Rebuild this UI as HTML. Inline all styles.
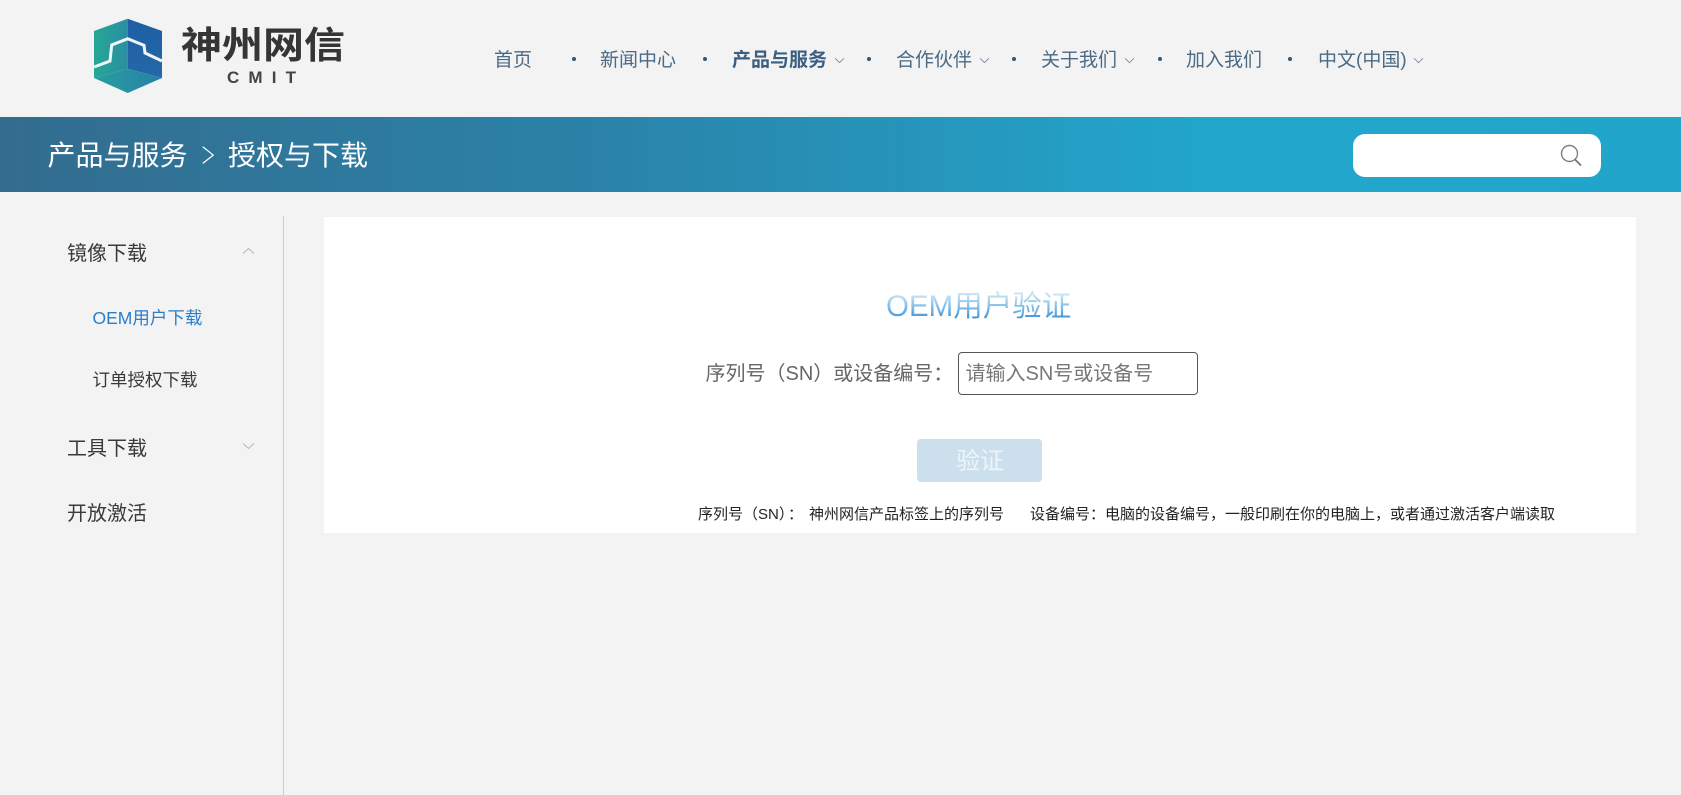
<!DOCTYPE html>
<html lang="zh-CN">
<head>
<meta charset="utf-8">
<title>授权与下载</title>
<style>
html,body{margin:0;padding:0;width:1681px;height:795px;overflow:hidden;background:#f3f3f4;}
body{position:relative;font-family:"Liberation Sans","Noto Sans CJK SC",sans-serif;}
.t{position:absolute;white-space:nowrap;}
.nav{font-size:19px;line-height:30px;top:46px;color:#4b6a85;}
.dot{position:absolute;width:4px;height:4px;border-radius:50%;background:#3a566c;top:57px;}
svg{position:absolute;overflow:visible;}
.band{position:absolute;left:0;top:117px;width:1681px;height:75px;background:linear-gradient(90deg,#336c8f 0,#2b82a8 35%,#22a6cc 72%,#21a5cb 100%);}
.side{font-size:20px;line-height:30px;color:#3a3a3a;left:67px;}
.sub{font-size:17.5px;line-height:28px;left:92.5px;}
</style>
</head>
<body>
<!-- logo -->
<svg style="left:0;top:0" width="400" height="117" viewBox="0 0 400 117">
<defs>
<linearGradient id="g1" x1="0" y1="0" x2="1" y2="0"><stop offset="0" stop-color="#26a896"/><stop offset="1" stop-color="#2a8ea2"/></linearGradient>
<linearGradient id="g2" x1="0" y1="0" x2="0" y2="1"><stop offset="0" stop-color="#1f5ea3"/><stop offset="1" stop-color="#2468a8"/></linearGradient>
<linearGradient id="g3" x1="0" y1="0" x2="1" y2="0"><stop offset="0" stop-color="#289f9e"/><stop offset="1" stop-color="#2680a8"/></linearGradient>
</defs>
<polygon points="94,31 127.7,18.7 127.7,68.7 94,78" fill="url(#g1)"/>
<polygon points="127.7,18.7 162,31 162,78 127.7,68.7" fill="url(#g2)"/>
<polygon points="94,78 127.7,68.7 162,78 127.7,93" fill="url(#g3)"/>
<polyline points="94,67 110,61 111.7,45 127.7,38.7 144,45.3 145,53 162,61" fill="none" stroke="#f0f6f6" stroke-width="3"/>
<text x="181" y="58" font-family="'Noto Sans CJK SC',sans-serif" font-weight="700" font-size="37" fill="#353535" textLength="164" lengthAdjust="spacingAndGlyphs">神州网信</text>
<text x="227" y="83" font-family="'Liberation Sans',sans-serif" font-weight="700" font-size="17" fill="#444" textLength="69">CMIT</text>
</svg>

<!-- nav -->
<span class="t nav" style="left:494px">首页</span>
<i class="dot" style="left:572px"></i>
<span class="t nav" style="left:600px">新闻中心</span>
<i class="dot" style="left:703px"></i>
<span class="t nav" style="left:732px;font-weight:700;color:#3a5f80">产品与服务</span>
<svg style="left:834px;top:57px" width="11" height="7" viewBox="0 0 12 8"><path d="M1 1.5L6 6.5L11 1.5" fill="none" stroke="#76879a" stroke-width="1"/></svg>
<i class="dot" style="left:867px"></i>
<span class="t nav" style="left:896px">合作伙伴</span>
<svg style="left:979px;top:57px" width="11" height="7" viewBox="0 0 12 8"><path d="M1 1.5L6 6.5L11 1.5" fill="none" stroke="#76879a" stroke-width="1"/></svg>
<i class="dot" style="left:1012px"></i>
<span class="t nav" style="left:1041px">关于我们</span>
<svg style="left:1124px;top:57px" width="11" height="7" viewBox="0 0 12 8"><path d="M1 1.5L6 6.5L11 1.5" fill="none" stroke="#76879a" stroke-width="1"/></svg>
<i class="dot" style="left:1158px"></i>
<span class="t nav" style="left:1186px">加入我们</span>
<i class="dot" style="left:1288px"></i>
<span class="t nav" style="left:1318px">中文(中国)</span>
<svg style="left:1413px;top:57px" width="11" height="7" viewBox="0 0 12 8"><path d="M1 1.5L6 6.5L11 1.5" fill="none" stroke="#76879a" stroke-width="1"/></svg>

<!-- band -->
<div class="band"></div>
<span class="t" style="left:47.5px;top:136px;font-size:28px;line-height:40px;color:#fff">产品与服务</span>
<svg style="left:201px;top:145px" width="14" height="21" viewBox="0 0 16 22"><path d="M2 1L14 10.5L2 20" fill="none" stroke="#fff" stroke-width="1.4"/></svg>
<span class="t" style="left:228px;top:136px;font-size:28px;line-height:40px;color:#fff">授权与下载</span>
<div style="position:absolute;left:1353px;top:134px;width:248px;height:43px;background:#fff;border-radius:12px"></div>
<svg style="left:1558px;top:144px" width="26" height="24" viewBox="0 0 26 24"><circle cx="11.5" cy="9.5" r="8" fill="none" stroke="#808080" stroke-width="1.4"/><path d="M17 15.5L23 21.5" stroke="#707070" stroke-width="1.6" fill="none"/></svg>

<!-- sidebar -->
<div style="position:absolute;left:283px;top:216px;width:1px;height:579px;background:#cfcfcf"></div>
<span class="t side" style="top:239px">镜像下载</span>
<svg style="left:242px;top:247px" width="13" height="8" viewBox="0 0 13 8"><path d="M1 6.5L6.5 1.5L12 6.5" fill="none" stroke="#b5b5b5" stroke-width="1"/></svg>
<span class="t sub" style="top:304px;color:#2b7ec8">OEM用户下载</span>
<span class="t sub" style="top:366px;color:#3a3a3a">订单授权下载</span>
<span class="t side" style="top:434px">工具下载</span>
<svg style="left:242px;top:442px" width="13" height="8" viewBox="0 0 13 8"><path d="M1 1.5L6.5 6.5L12 1.5" fill="none" stroke="#b5b5b5" stroke-width="1"/></svg>
<span class="t side" style="top:499px">开放激活</span>

<!-- panel -->
<div style="position:absolute;left:324px;top:217px;width:1312px;height:316px;background:#fff"></div>
<span class="t" style="left:886px;top:287px;font-size:29.5px;line-height:40px;background:linear-gradient(180deg,#c8e5f6 18%,#7fbde8 50%,#3a8fd6 82%);-webkit-background-clip:text;background-clip:text;color:transparent">OEM用户验证</span>
<span class="t" style="left:705.5px;top:359px;font-size:20px;line-height:30px;color:#666">序列号（SN）或设备编号：</span>
<div style="position:absolute;left:958px;top:352px;width:238px;height:41px;border:1px solid #555;border-radius:4px;background:#fff"></div>
<span class="t" style="left:965.5px;top:359px;font-size:20px;line-height:30px;color:#777">请输入SN号或设备号</span>
<div style="position:absolute;left:917px;top:439px;width:125px;height:43px;background:#cbdfec;border-radius:4px"></div>
<span class="t" style="left:956px;top:445px;font-size:24px;line-height:34px;color:#eef5fa">验证</span>
<span class="t" style="left:698px;top:504px;font-size:15px;line-height:22px;color:#222">序列号（SN）</span>
<span class="t" style="left:788px;top:504px;font-size:15px;line-height:22px;color:#222">：</span>
<span class="t" style="left:809px;top:504px;font-size:15px;line-height:22px;color:#222">神州网信产品标签上的序列号</span>
<span class="t" style="left:1030px;top:504px;font-size:15px;line-height:22px;color:#222">设备编号：电脑的设备编号，一般印刷在你的电脑上，或者通过激活客户端读取</span>
</body>
</html>
